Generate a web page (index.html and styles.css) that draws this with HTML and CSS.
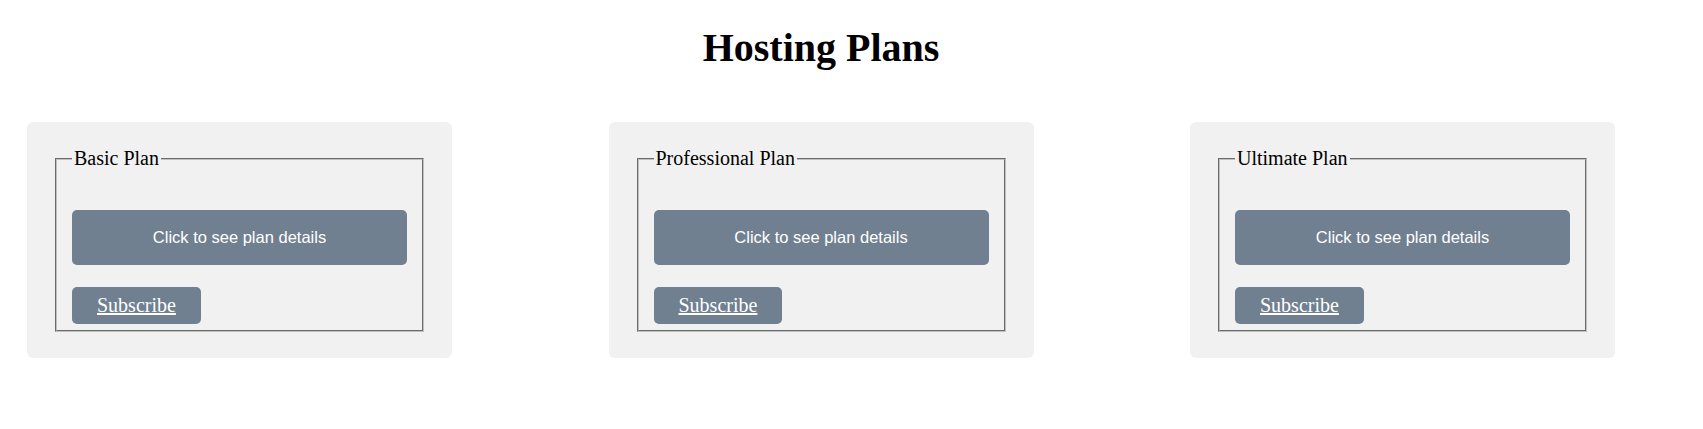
FILE: index.html
```html
<!DOCTYPE html>
<html lang="en">
<head>
<meta charset="utf-8">
<title>Hosting Plans</title>
<link rel="stylesheet" href="styles.css">
</head>
<body>
<div class="page">
  <h1 class="title">Hosting Plans</h1>
  <div class="plans">
    <div class="card">
      <fieldset class="plan">
        <legend class="plan-name">Basic Plan</legend>
        <button class="details-btn" type="button">Click to see plan details</button>
        <a class="subscribe" href="#">Subscribe</a>
      </fieldset>
    </div>
    <div class="card">
      <fieldset class="plan">
        <legend class="plan-name">Professional Plan</legend>
        <button class="details-btn" type="button">Click to see plan details</button>
        <a class="subscribe" href="#">Subscribe</a>
      </fieldset>
    </div>
    <div class="card">
      <fieldset class="plan">
        <legend class="plan-name">Ultimate Plan</legend>
        <button class="details-btn" type="button">Click to see plan details</button>
        <a class="subscribe" href="#">Subscribe</a>
      </fieldset>
    </div>
  </div>
</div>
</body>
</html>
```
FILE: styles.css
```css
body {
  margin: 0;
  font-family: "Liberation Serif", "Times New Roman", serif;
  background: #ffffff;
  color: #000000;
}

.page {
  margin-left: 27px;
  width: 1588px;
  padding-top: 26px;
}

.title {
  font-size: 40px;
  line-height: 44px;
  font-weight: bold;
  text-align: center;
  margin: 0;
}

.plans {
  display: flex;
  justify-content: space-between;
  margin-top: 52px;
}

.card {
  width: 425px;
  box-sizing: border-box;
  padding: 26px;
  background: #f1f1f1;
  border-radius: 6px;
}

.plan {
  margin: 0 2px;
  padding: 0 15px 6px;
  border: 2px groove rgb(192, 192, 192);
  display: flex;
  flex-direction: column;
  align-items: flex-start;
}

.plan-name {
  font-size: 20px;
  line-height: 21px;
  padding: 0 2px;
}

.details-btn {
  align-self: stretch;
  margin-top: 41px;
  padding: 18px 10px;
  line-height: 19px;
  border: none;
  border-radius: 5px;
  background: #708090;
  color: #ffffff;
  font-family: "Liberation Sans", Arial, sans-serif;
  font-size: 16.5px;
  cursor: pointer;
}

.subscribe {
  margin-top: 22px;
  padding: 7px 25px;
  line-height: 23px;
  font-size: 20px;
  background: #708090;
  color: #ffffff;
  border-radius: 5px;
}
```
